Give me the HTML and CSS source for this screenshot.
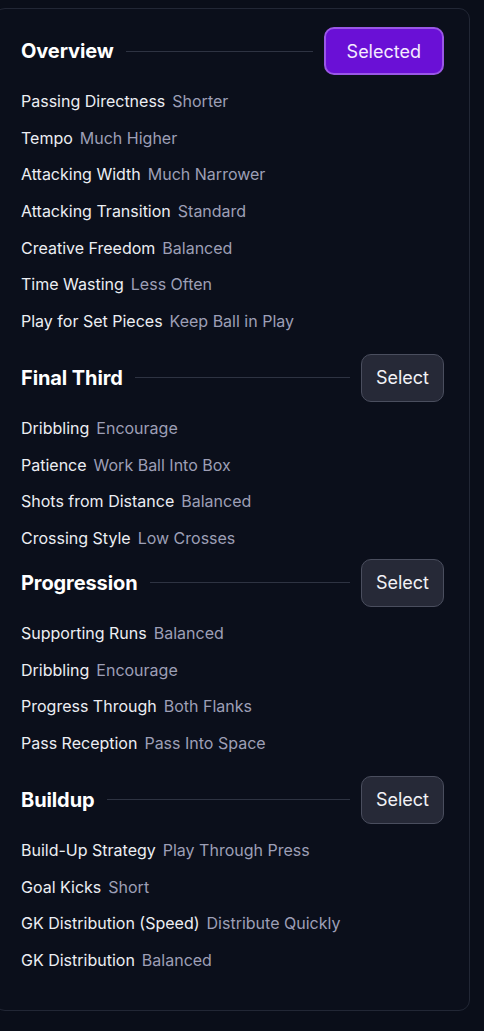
FILE: index.html
```html
<!DOCTYPE html>
<html>
<head>
<meta charset="utf-8">
<link rel="stylesheet" href="styles.css">
</head>
<body>
<div class="card">
  <section class="section">
    <div class="head">
      <h2 class="title">Overview</h2>
      <div class="rule"></div>
      <button class="btn btn-selected">Selected</button>
    </div>
    <ul class="rows">
      <li><span class="label">Passing Directness</span><span class="value">Shorter</span></li>
      <li><span class="label">Tempo</span><span class="value">Much Higher</span></li>
      <li><span class="label">Attacking Width</span><span class="value">Much Narrower</span></li>
      <li><span class="label">Attacking Transition</span><span class="value">Standard</span></li>
      <li><span class="label">Creative Freedom</span><span class="value">Balanced</span></li>
      <li><span class="label">Time Wasting</span><span class="value">Less Often</span></li>
      <li><span class="label">Play for Set Pieces</span><span class="value">Keep Ball in Play</span></li>
    </ul>
  </section>
  <section class="section tight">
    <div class="head">
      <h2 class="title">Final Third</h2>
      <div class="rule"></div>
      <button class="btn">Select</button>
    </div>
    <ul class="rows">
      <li><span class="label">Dribbling</span><span class="value">Encourage</span></li>
      <li><span class="label">Patience</span><span class="value">Work Ball Into Box</span></li>
      <li><span class="label">Shots from Distance</span><span class="value">Balanced</span></li>
      <li><span class="label">Crossing Style</span><span class="value">Low Crosses</span></li>
    </ul>
  </section>
  <section class="section">
    <div class="head">
      <h2 class="title">Progression</h2>
      <div class="rule"></div>
      <button class="btn">Select</button>
    </div>
    <ul class="rows">
      <li><span class="label">Supporting Runs</span><span class="value">Balanced</span></li>
      <li><span class="label">Dribbling</span><span class="value">Encourage</span></li>
      <li><span class="label">Progress Through</span><span class="value">Both Flanks</span></li>
      <li><span class="label">Pass Reception</span><span class="value">Pass Into Space</span></li>
    </ul>
  </section>
  <section class="section last">
    <div class="head">
      <h2 class="title">Buildup</h2>
      <div class="rule"></div>
      <button class="btn">Select</button>
    </div>
    <ul class="rows">
      <li><span class="label">Build-Up Strategy</span><span class="value">Play Through Press</span></li>
      <li><span class="label">Goal Kicks</span><span class="value">Short</span></li>
      <li><span class="label">GK Distribution (Speed)</span><span class="value">Distribute Quickly</span></li>
      <li><span class="label">GK Distribution</span><span class="value">Balanced</span></li>
    </ul>
  </section>
</div>
</body>
</html>
```

FILE: styles.css
```css
html, body {
  margin: 0;
  padding: 0;
  background: #0a0e19;
  font-family: Inter, "Noto Sans", sans-serif;
}
body {
  padding-top: 8px;
  height: 1031px;
  box-sizing: border-box;
  overflow: hidden;
}
.card {
  margin: 0 14px 0 -6px;
  height: 1003px;
  box-sizing: border-box;
  border: 1px solid #222735;
  border-radius: 11px;
  background: #0b0f1b;
  padding: 18px 25px 0 26px;
}
.section {
  margin-bottom: 21px;
}
.section.tight {
  margin-bottom: 9px;
}
.head {
  display: flex;
  align-items: center;
  height: 48px;
}
.title {
  margin: 0;
  font-size: 20px;
  font-weight: 700;
  color: #ffffff;
  letter-spacing: -0.1px;
}
.rule {
  flex: 1;
  height: 1px;
  background: #2e3342;
  margin: 0 11px 0 12px;
}
.btn {
  height: 48px;
  box-sizing: border-box;
  padding: 0 14px;
  border-radius: 10px;
  border: 1.5px solid #4a4e5e;
  background: #262937;
  color: #f2f2f6;
  font-family: inherit;
  font-size: 18px;
  font-weight: 400;
}
.btn-selected {
  padding: 0 21px;
  border: 2.5px solid #9a57e6;
  background: #6a10d6;
  color: #f4ebff;
}
.rows {
  list-style: none;
  margin: 14px 0 0;
  padding: 0;
  display: flex;
  flex-direction: column;
  gap: 12.67px;
}
.rows li {
  display: flex;
  gap: 7px;
  line-height: 24px;
  font-size: 16px;
  letter-spacing: 0;
}
.label {
  color: #eceef3;
}
.value {
  color: #9d9fb6;
}
```
